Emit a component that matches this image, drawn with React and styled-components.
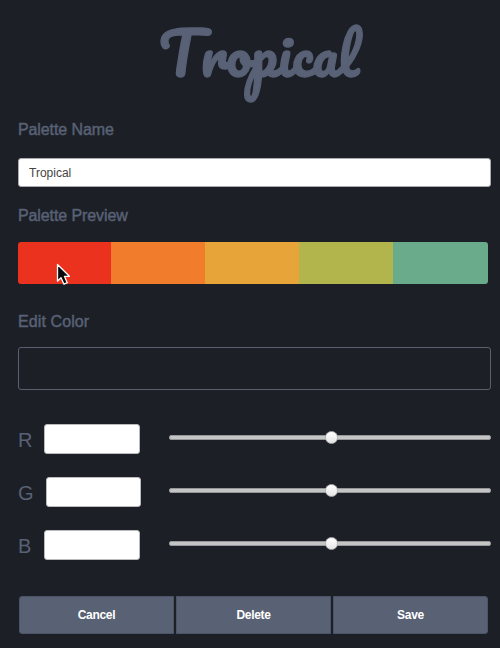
import React from "react";
import styled, { createGlobalStyle } from "styled-components";

const GlobalStyle = createGlobalStyle`
  * { box-sizing: border-box; }
  body {
    margin: 0;
    background: #1c1f26;
    font-family: "Liberation Sans", Arial, sans-serif;
    overflow: hidden;
  }
`;

const Page = styled.main`
  position: relative;
  display: flex;
  flex-direction: column;
  height: 648px;
  padding: 0 9px 0 18px;
  color: #586175;
  background: #1c1f26;
`;

const Title = styled.h1`
  height: 120px;
  margin: 0 0 0 141px;
  font-family: Pacifico, cursive;
  font-size: 56px;
  font-weight: 400;
  line-height: 107px;
  white-space: nowrap;
  -webkit-text-stroke: 1.3px #586175;
`;

const Initial = styled.span`
  margin-right: 1px;
  font-size: 58px;
  line-height: 1;
`;

const Label = styled.label`
  display: block;
  height: 20px;
  margin-bottom: ${({ $gap }) => $gap}px;
  font-size: 16px;
  line-height: 20px;
  letter-spacing: ${({ $spacing }) => $spacing || "-0.1px"};
  -webkit-text-stroke: 0.45px #586175;
`;

const TextField = styled.input`
  height: 29px;
  width: 473px;
  margin: 0 0 19px;
  padding: 0 10px;
  border: 1px solid #a9abb0;
  border-radius: 3px;
  outline: none;
  background: #fff;
  color: #444;
  font: 12px "Liberation Sans", Arial, sans-serif;
`;

const Swatches = styled.div`
  display: grid;
  grid-template-columns: 93px repeat(3, 94px) 95px;
  width: 470px;
  height: 42px;
  margin-bottom: 28px;
  border-radius: 3px;
  overflow: hidden;
`;

const Swatch = styled.div`
  background: ${({ $color }) => $color};
`;

const ColorField = styled.div`
  height: 43px;
  margin-bottom: 34px;
  border: 1px solid #586070;
  border-radius: 3px;
`;

const Channels = styled.div`
  display: grid;
  grid-auto-rows: 53px;
  height: 172px;
`;

const Channel = styled.div`
  display: grid;
  grid-template-columns: 151px 322px;
  align-items: start;
`;

const ValueGroup = styled.label`
  display: flex;
  gap: ${({ $gap }) => $gap}px;
  font-size: 20px;
  line-height: 32px;
`;

const ValueInput = styled.input`
  width: ${({ $width }) => $width}px;
  height: 30px;
  padding: 0 8px;
  border: 1px solid #b9bbbf;
  border-radius: 3px;
  outline: none;
  background: #fff;
`;

const Slider = styled.input`
  appearance: none;
  width: 322px;
  height: 12px;
  margin: 7px 0 0;
  background: transparent;
  outline: none;

  &::-webkit-slider-runnable-track {
    height: 5px;
    border: 1px solid #96979a;
    border-radius: 2px;
    background: #c5c5c6;
  }

  &::-webkit-slider-thumb {
    appearance: none;
    width: 13px;
    height: 13px;
    margin-top: -5px;
    border: 1px solid #b1b2b4;
    border-radius: 50%;
    background: linear-gradient(#fff, #e5e5e5);
  }
`;

const Actions = styled.div`
  display: grid;
  grid-template-columns: repeat(3, 1fr);
  gap: 2px;
  width: 469px;
  height: 38px;
  margin-left: 1px;
`;

const Button = styled.button`
  padding: 0 0 1px;
  border: 1px solid #4c5467;
  border-radius: ${({ $radius }) => $radius || "0"};
  background: #596174;
  color: #fff;
  font: 700 12px "Liberation Sans", Arial, sans-serif;
  letter-spacing: -0.3px;
`;

const Cursor = styled.svg`
  position: absolute;
  left: 56px;
  top: 263px;
  width: 15px;
  height: 23px;
`;

const colors = ["#eb321e", "#f17d2c", "#e6a439", "#b1b54b", "#6aab8b"];
const channels = [
  { name: "R", gap: 12, width: 96 },
  { name: "G", gap: 12, width: 95 },
  { name: "B", gap: 13, width: 96 },
];

export default function App() {
  return (
    <Page>
      <GlobalStyle />
      <Title><Initial>T</Initial>ropical</Title>
      <Label htmlFor="name" $gap={18}>Palette Name</Label>
      <TextField id="name" defaultValue="Tropical" />
      <Label as="div" $gap={16}>Palette Preview</Label>
      <Swatches>
        {colors.map((color) => <Swatch key={color} $color={color} />)}
      </Swatches>
      <Label as="div" $gap={15} $spacing="0.1px">Edit Color</Label>
      <ColorField />
      <Channels>
        {channels.map(({ name, gap, width }) => (
          <Channel key={name}>
            <ValueGroup $gap={gap}>{name}<ValueInput $width={width} /></ValueGroup>
            <Slider type="range" aria-label={name} min="0" max="254" defaultValue="128" />
          </Channel>
        ))}
      </Channels>
      <Actions>
        <Button $radius="3px 0 0 3px">Cancel</Button>
        <Button>Delete</Button>
        <Button $radius="0 3px 3px 0">Save</Button>
      </Actions>
      <Cursor viewBox="0 0 15 23" aria-hidden="true">
        <path d="M1.5 1.5V18.2L5 14.8L8 21.2L11.3 19.7L8.4 13.3H13.4Z" fill="#080a0c" stroke="#fff" strokeWidth="1.3" strokeLinejoin="round" />
      </Cursor>
    </Page>
  );
}
